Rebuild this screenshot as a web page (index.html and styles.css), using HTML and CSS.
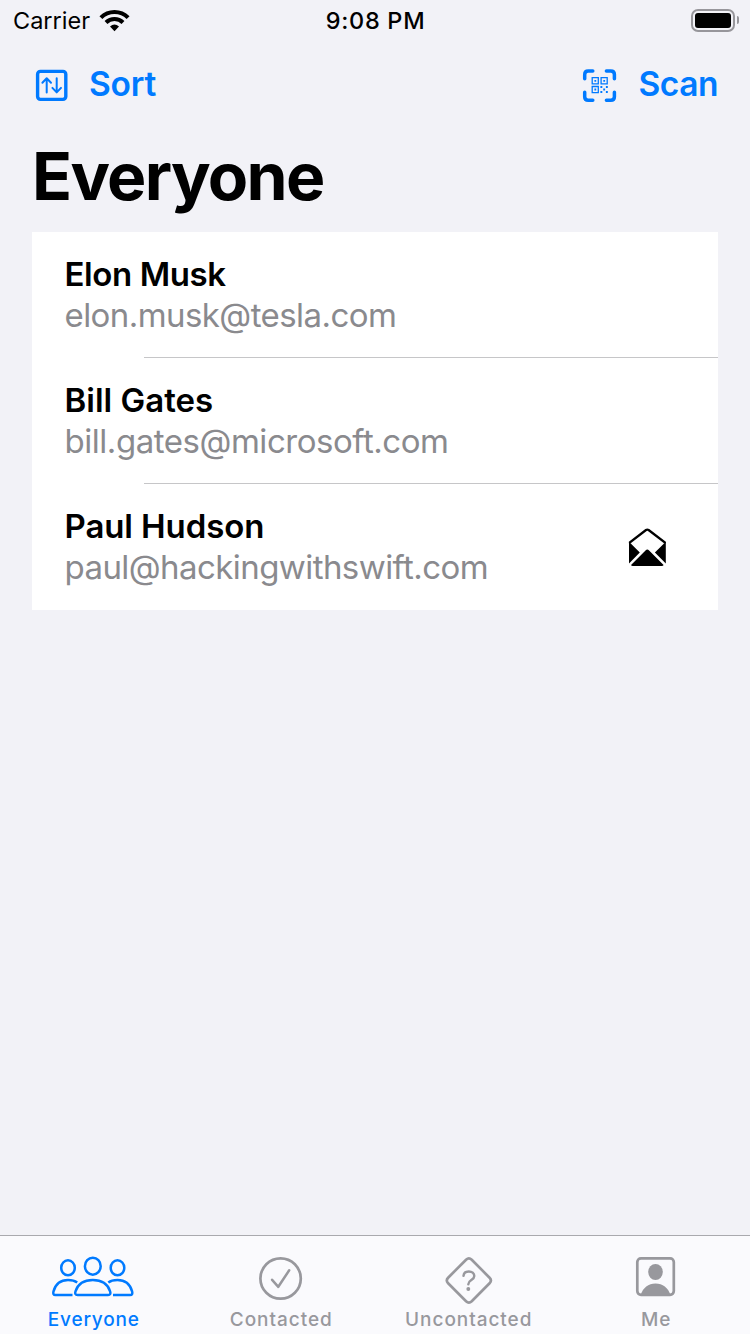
FILE: index.html
```html
<!DOCTYPE html>
<html lang="en">
<head>
<meta charset="utf-8">
<title>Everyone</title>
<link rel="stylesheet" href="styles.css">
</head>
<body>
<div class="screen">
  <div class="status">
    <div class="status-left">
      <span class="carrier">Carrier</span>
      <svg class="wifi" viewBox="99 9 31 24" width="31" height="24" fill="none" stroke="#000">
        <path d="M100.900 17.600 A19.300 19.300 0 0 1 128.100 17.600" stroke-width="4.100"/>
        <path d="M106 22.500 A12.200 12.200 0 0 1 123 22.500" stroke-width="4.100"/>
        <path d="M110 26.600 Q114.500 22.600 119 26.600 L114.500 31.200Z" fill="#000" stroke="none"/>
      </svg>
    </div>
    <span class="time">9:08 PM</span>
    <div class="status-right">
      <span class="battery"><span class="charge"></span></span>
      <span class="battery-cap"></span>
    </div>
  </div>

  <nav class="toolbar">
    <div class="action">
      <svg viewBox="35 68 34 34" width="34" height="34" fill="none" stroke="#007aff" stroke-linecap="round" stroke-linejoin="round">
        <rect x="37.600" y="71.400" width="28.200" height="28" rx="2.800" stroke-width="3.400"/>
        <path d="M46.700 92.400V78.600M42.400 82.800L46.700 78.300L51 82.800M56.700 78.300V92M52.400 87.900L56.700 92.400L61 87.900" stroke-width="2"/>
      </svg>
      <span class="action-label sort-label">Sort</span>
    </div>
    <div class="action">
      <svg viewBox="583 68 36 36" width="36" height="36" fill="none" stroke="#007aff">
        <path d="M585.700 78.800V74.400Q585.700 70.900 589.200 70.900H593.800M607.400 70.900H611.800Q615.400 70.900 615.400 74.400V78.800M615.400 92.300V96.700Q615.400 100.200 611.800 100.200H607.400M593.800 100.200H589.200Q585.700 100.200 585.700 96.700V92.300" stroke-width="3.500" stroke-linecap="round"/>
        <path d="M593.200 77.600h6.100v6.300h-6.100zM602.100 77.600h6.100v6.300h-6.100zM593.200 86.500h6.100v6.100h-6.100z" stroke-width="1.300"/>
        <path d="M595.400 79.900h1.800v1.800h-1.800zM604.300 79.900h1.800v1.800h-1.800zM595.400 88.600h1.800v1.800h-1.800zM601.400 86h1.900v1.900h-1.900zM606.900 86h1.900v1.900h-1.900zM604.200 88.500h1.900v1.900h-1.900zM601.400 91.100h1.900v1.900h-1.900zM606.900 91.100h1.900v1.900h-1.900z" fill="#007aff" stroke="none"/>
      </svg>
      <span class="action-label scan-label">Scan</span>
    </div>
  </nav>

  <h1 class="title">Everyone</h1>

  <main class="list">
    <div class="row">
      <div class="person">
        <div class="name n1">Elon Musk</div>
        <div class="email e1">elon.musk@tesla.com</div>
      </div>
    </div>
    <div class="row">
      <div class="person">
        <div class="name n2">Bill Gates</div>
        <div class="email e2">bill.gates@microsoft.com</div>
      </div>
    </div>
    <div class="row">
      <div class="person">
        <div class="name n3">Paul Hudson</div>
        <div class="email e3">paul@hackingwithswift.com</div>
      </div>
      <svg class="envelope" viewBox="628 527 39 40" width="39" height="40">
        <path d="M630 543.200V542.300L646 530Q647.300 529.100 648.600 530L664.700 542.300V543.200" fill="none" stroke="#000" stroke-width="2.300"/>
        <path d="M629 541.800L639.800 552.600L629 563.400ZM665.800 541.800L654.900 552.600L665.800 563.400ZM631 565L645.500 550.400Q647.300 548.800 649.100 550.400L663.600 565Q663.200 566 661.800 566H632.800Q631.400 566 631 565Z"/>
      </svg>
    </div>
  </main>

  <footer class="tabs">
    <div class="tab active">
      <svg viewBox="51 1255 86 50" width="86" height="50" fill="none" stroke="currentColor" stroke-width="2.500">
        <ellipse cx="92.800" cy="1266.200" rx="7.900" ry="8.500"/>
        <ellipse cx="68" cy="1267.800" rx="6.800" ry="7.500"/>
        <ellipse cx="117.500" cy="1267.800" rx="6.800" ry="7.500"/>
        <path d="M77.500 1294.900Q74.300 1294.900 75.500 1291.300C78 1284 84.300 1280.100 92.800 1280.100S107.600 1284 110.100 1291.300Q111.300 1294.900 108.100 1294.900Z"/>
        <path d="M77.200 1282.500C75 1280.900 71.800 1280.100 68 1280.100C60.700 1280.100 55.500 1284.500 53.500 1291.400Q52.500 1294.900 55.500 1294.900H72.500M108.300 1282.500C110.500 1280.900 113.700 1280.100 117.500 1280.100C124.900 1280.100 130.100 1284.500 132.100 1291.400Q133.100 1294.900 130.100 1294.900H113"/>
      </svg>
      <span class="t1">Everyone</span>
    </div>
    <div class="tab">
      <svg viewBox="258 1255 46 50" width="46" height="50" fill="none" stroke="currentColor" stroke-width="2.700" stroke-linecap="round" stroke-linejoin="round">
        <circle cx="280.600" cy="1278.500" r="20.200"/>
        <path d="M272.100 1279.800L278.300 1286.800L289.200 1270.300" stroke-width="2.500"/>
      </svg>
      <span class="t2">Contacted</span>
    </div>
    <div class="tab">
      <svg viewBox="444 1255 50 51" width="50" height="51" fill="none" stroke="currentColor" stroke-width="2.700" stroke-linecap="round" stroke-linejoin="round">
        <path d="M466 1259.800Q468.900 1257 471.800 1259.800L490 1278.200Q492.700 1281 490 1283.800L471.800 1302.200Q468.900 1305 466 1302.200L447.700 1283.800Q445 1281 447.700 1278.200Z"/>
        <path d="M463.400 1276.200C463.700 1273.300 465.800 1271.800 468.800 1271.800C472 1271.800 474.400 1273.700 474.400 1276.500C474.400 1280.600 468.300 1280.600 468.300 1284.800" stroke-width="2.500"/>
        <circle cx="468.300" cy="1289.700" r="2" fill="currentColor" stroke="none"/>
      </svg>
      <span class="t3">Uncontacted</span>
    </div>
    <div class="tab">
      <svg viewBox="635 1255 42 50" width="42" height="50" fill="currentColor">
        <rect x="637.300" y="1258.400" width="36.500" height="36.400" rx="3.700" fill="none" stroke="currentColor" stroke-width="2.700"/>
        <ellipse cx="655.500" cy="1272" rx="7.300" ry="8"/>
        <path d="M640.600 1295C643 1287.500 648.300 1283.400 655.500 1283.400S668.100 1287.500 670.500 1295Z"/>
      </svg>
      <span class="t4">Me</span>
    </div>
  </footer>
</div>
</body>
</html>
```
FILE: styles.css
```css
* { box-sizing: border-box; }
body { margin: 0; font-family: Inter, "Liberation Sans", sans-serif; background: #f2f2f7; color: #000; font-variant-ligatures: none; }
svg { display: block; flex: none; }
.screen { width: 750px; height: 1334px; display: flex; flex-direction: column; }
.status { height: 40px; display: grid; grid-template-columns: 1fr auto 1fr; align-items: center; padding: 0 11px 0 13px; }
.status-left { display: flex; align-items: center; gap: 9px; }
.carrier { font-size: 23.5px; line-height: 40px; padding-top: 1px; white-space: nowrap; }
.time { font-size: 23.5px; font-weight: 500; letter-spacing: 0.7px; line-height: 40px; padding-top: 1px; margin-right: 1px; white-space: nowrap; }
.status-right { display: flex; align-items: center; justify-content: flex-end; gap: 2px; padding-bottom: 1px; }
.battery { width: 44px; height: 23px; border: 2px solid #97969b; border-radius: 7px; padding: 2px; display: flex; }
.charge { flex: 1; background: #000; border-radius: 3px; }
.battery-cap { width: 2px; height: 8px; background: #97969b; border-radius: 0 2px 2px 0; }
.toolbar { height: 88px; display: flex; justify-content: space-between; padding: 28px 32px 0 35px; color: #007aff; }
.action { display: flex; align-items: flex-start; gap: 20px; }
.action-label { font-size: 33.5px; font-weight: 600; line-height: 33px; letter-spacing: -0.2px; }
.scan-label { letter-spacing: -0.45px; }
.title { margin: 0; height: 104px; padding: 7px 0 0 32px; font-size: 66px; font-weight: 700; line-height: 82px; letter-spacing: -1.7px; }
.list { margin: 0 32px; background: #fff; height: 378px; }
.row { height: 126px; display: flex; justify-content: space-between; padding: 22px 51px 0 32.5px; background: linear-gradient(#c6c6c8, #c6c6c8) right bottom / 574px 1px no-repeat; }
.row:last-child { background: none; }
.name { font-size: 33px; font-weight: 600; line-height: 41px; letter-spacing: -0.1px; white-space: nowrap; }
.n1 { letter-spacing: -0.4px; }
.n2 { letter-spacing: 0; }
.email { font-size: 33px; line-height: 41px; letter-spacing: -0.57px; color: #8a8a8e; white-space: nowrap; }
.e2 { letter-spacing: -0.46px; }
.envelope { margin-top: 21px; }
.tabs { margin-top: auto; height: 99px; border-top: 1px solid #a9a9ae; background: #fafafd; display: grid; grid-template-columns: repeat(4, 1fr); color: #98989d; }
.tab { display: flex; flex-direction: column; align-items: center; padding-top: 19px; font-size: 19px; font-weight: 450; }
.tab svg { height: 50px; }
.tab span { line-height: 30px; letter-spacing: 0.95px; white-space: nowrap; }
.tab .t1 { letter-spacing: 0.8px; }
.active { color: #007aff; }
```
